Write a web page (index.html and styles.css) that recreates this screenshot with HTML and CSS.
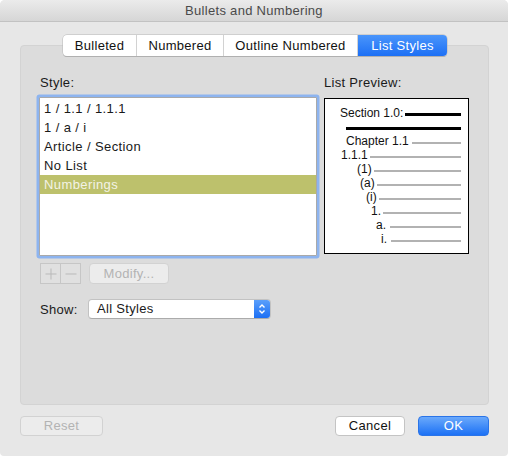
FILE: index.html
```html
<!DOCTYPE html>
<html>
<head>
<meta charset="utf-8">
<link rel="stylesheet" href="styles.css">
</head>
<body>
<div class="window">
  <div class="titlebar">Bullets and Numbering</div>
  <div class="tabs-row">
    <div class="tabs">
      <div class="tab t1">Bulleted</div>
      <div class="tab t2">Numbered</div>
      <div class="tab t3">Outline Numbered</div>
      <div class="tab t4 active">List Styles</div>
    </div>
  </div>
  <div class="panel">
    <div class="columns">
      <div class="left-col">
        <div class="label">Style:</div>
        <div class="listbox">
          <div class="item">1 / 1.1 / 1.1.1</div>
          <div class="item">1 / a / i</div>
          <div class="item">Article / Section</div>
          <div class="item">No List</div>
          <div class="item selected">Numberings</div>
        </div>
      </div>
      <div class="right-col">
        <div class="label">List Preview:</div>
        <div class="preview">
          <div class="prow p1"><span>Section 1.0:</span><i class="line thick"></i></div>
          <div class="prow p2"><i class="line thick"></i></div>
          <div class="prow p3"><span>Chapter 1.1</span><i class="line"></i></div>
          <div class="prow p4"><span>1.1.1</span><i class="line"></i></div>
          <div class="prow p5"><span>(1)</span><i class="line"></i></div>
          <div class="prow p6"><span>(a)</span><i class="line"></i></div>
          <div class="prow p7"><span>(i)</span><i class="line"></i></div>
          <div class="prow p8"><span>1.</span><i class="line"></i></div>
          <div class="prow p9"><span>a.</span><i class="line"></i></div>
          <div class="prow p10"><span>i.</span><i class="line"></i></div>
        </div>
      </div>
    </div>
    <div class="controls">
      <div class="plusminus">
        <div class="pm-cell">
          <svg width="12" height="12" viewBox="0 0 12 12"><path d="M6 0.5V11.5M0.5 6H11.5" stroke="#b9b9b9" stroke-width="1" fill="none"/></svg>
        </div>
        <div class="pm-cell">
          <svg width="12" height="12" viewBox="0 0 12 12"><path d="M0.5 6H11.5" stroke="#b9b9b9" stroke-width="1" fill="none"/></svg>
        </div>
      </div>
      <div class="btn disabled modify">Modify...</div>
    </div>
    <div class="show-row">
      <div class="show-label">Show:</div>
      <div class="dropdown">
        <span class="dd-text">All Styles</span>
        <span class="stepper">
          <svg width="8" height="12" viewBox="0 0 8 12"><path d="M1.5 4.5L4 2L6.5 4.5M1.5 7.5L4 10L6.5 7.5" stroke="#fff" stroke-width="1.4" fill="none"/></svg>
        </span>
      </div>
    </div>
  </div>
  <div class="footer">
    <div class="btn disabled reset">Reset</div>
    <div class="spacer"></div>
    <div class="btn cancel">Cancel</div>
    <div class="btn ok">OK</div>
  </div>
</div>
</body>
</html>
```
FILE: styles.css
```css
html, body {
  margin: 0;
  padding: 0;
}
body {
  font-family: "Liberation Sans", Arial, sans-serif;
  font-size: 13px;
  letter-spacing: 0.3px;
  color: #1a1a1a;
  width: 508px;
  height: 456px;
  overflow: hidden;
}
.window {
  width: 508px;
  height: 456px;
  background: #e7e7e7;
  box-sizing: border-box;
  border-radius: 5px 5px 4px 4px;
  overflow: hidden;
}
.titlebar {
  height: 21px;
  line-height: 21px;
  text-align: center;
  color: #4a4a4a;
  background: linear-gradient(#ebebeb, #d6d6d6);
  border-bottom: 1px solid #c2c2c2;
}
.tabs-row {
  display: flex;
  justify-content: flex-start;
  padding-left: 63px;
  margin-top: 13px;
  position: relative;
  z-index: 1;
}
.tabs {
  display: flex;
  height: 21px;
  border-radius: 4px;
  background: #fff;
  box-shadow: 0 0 0 0.5px #b8b8b8, 0 1px 0 #a9a9a9;
  overflow: hidden;
}
.tab {
  height: 21px;
  line-height: 21px;
  text-align: center;
  box-sizing: border-box;
  color: #111;
  border-right: 1px solid #d2d2d2;
}
.t1 { width: 74px; }
.t2 { width: 87px; }
.t3 { width: 134px; }
.t4 { width: 89px; border-right: none; }
.tab.active {
  background: linear-gradient(#4a95fb, #1d70f5);
  color: #fff;
}
.panel {
  margin-top: -11px;
  margin-left: 20px;
  width: 469px;
  height: 360px;
  box-sizing: border-box;
  background: #dcdcdc;
  border: 1px solid #d3d3d3;
  border-radius: 4px;
  padding: 29px 0 0 18px;
}
.columns {
  display: flex;
}
.label {
  line-height: 16px;
  height: 16px;
  padding-left: 1px;
}
.right-col .label {
  padding-left: 0;
}
.listbox {
  margin-top: 6px;
  width: 278px;
  height: 159px;
  box-sizing: border-box;
  background: #fff;
  border: 1px solid #a9a9a9;
  box-shadow: 0 0 0 2.5px #8db4ef;
  border-radius: 1px;
  padding-top: 1px;
}
.item {
  height: 19px;
  line-height: 19px;
  padding-left: 4px;
  color: #1a1a1a;
  letter-spacing: 0.4px;
}
.item.selected {
  background: #bdc16c;
  color: #f3f3e6;
}
.right-col {
  margin-left: 7px;
}
.preview {
  margin-top: 7px;
  width: 145px;
  height: 156px;
  box-sizing: border-box;
  background: #fff;
  border: 1px solid #000;
  padding: 7px 7px 0 0;
  letter-spacing: 0;
}
.prow {
  display: flex;
  height: 14px;
  line-height: 14px;
  font-size: 12px;
  color: #111;
}
.prow span {
  white-space: nowrap;
}
.line {
  flex: 1;
  height: 2px;
  margin-top: 8px;
  margin-left: 2px;
  background: #b2b2b2;
}
.line.thick {
  height: 3px;
  margin-top: 7px;
  background: #000;
}
.p1 { padding-left: 15px; }
.p2 { padding-left: 21px; }
.p2 .line { margin-left: 0; }
.p3 { padding-left: 21px; }
.p3 .line { margin-left: 3px; }
.p4 { padding-left: 16px; }
.p5 { padding-left: 32px; }
.p6 { padding-left: 35px; }
.p7 { padding-left: 41px; }
.p8 { padding-left: 46px; }
.p9 { padding-left: 51px; }
.p10 { padding-left: 56px; }
.p9 .line, .p10 .line { margin-left: 4px; }
.controls {
  display: flex;
  margin-top: 7px;
  padding-left: 1px;
  height: 21px;
}
.plusminus {
  display: flex;
  width: 41px;
  height: 21px;
  box-sizing: border-box;
  border: 1px solid #c6c6c6;
  background: #e0e0e0;
}
.pm-cell {
  flex: 1;
  display: flex;
  align-items: center;
  justify-content: center;
}
.pm-cell + .pm-cell {
  border-left: 1px solid #c6c6c6;
}
.btn {
  box-sizing: border-box;
  height: 20px;
  line-height: 18px;
  text-align: center;
  border-radius: 4px;
  border: 1px solid #c4c4c4;
  background: #fff;
  color: #111;
}
.btn.disabled {
  background: #ececec;
  border-color: #d2d2d2;
  color: #b3b3b3;
}
.modify {
  margin-left: 8px;
  width: 80px;
  height: 21px;
  line-height: 19px;
}
.show-row {
  display: flex;
  align-items: center;
  margin-top: 15px;
  padding-left: 1px;
}
.show-label {
  width: 48px;
}
.dropdown {
  display: flex;
  width: 183px;
  height: 20px;
  box-sizing: border-box;
  background: #fff;
  border: 1px solid #c2c2c2;
  border-bottom-color: #ababab;
  border-radius: 4px;
  overflow: hidden;
}
.dd-text {
  flex: 1;
  line-height: 18px;
  padding-left: 8px;
}
.stepper {
  width: 16px;
  display: flex;
  align-items: center;
  justify-content: center;
  background: linear-gradient(#5a9ffb, #1c6ff4);
}
.footer {
  display: flex;
  margin-top: 11px;
  padding: 0 19px 0 20px;
}
.spacer {
  flex: 1;
}
.reset {
  width: 83px;
}
.cancel {
  width: 70px;
}
.ok {
  margin-left: 13px;
  width: 71px;
  border: 1px solid #2a74e8;
  background: linear-gradient(#6aa9fb, #1c71f5);
  color: #fff;
}
```
